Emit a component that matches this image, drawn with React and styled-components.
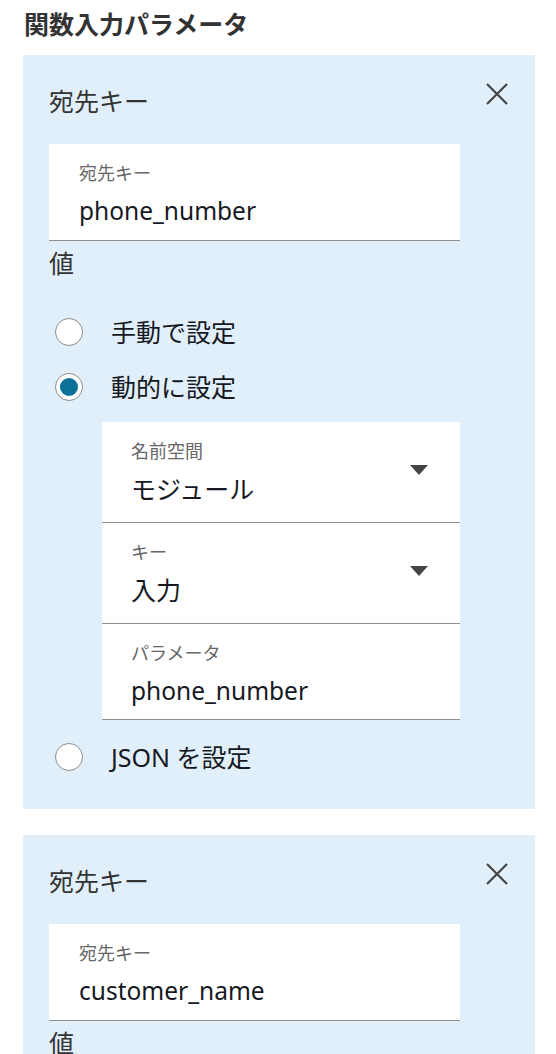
import React from 'react'
import styled, { createGlobalStyle } from 'styled-components'

const GlobalStyle = createGlobalStyle`
  body {
    margin: 0;
    background: #fff;
    font-family: "Noto Sans", "Noto Sans CJK JP", sans-serif;
    color: #16191f;
  }
`

const Page = styled.div`
  width: 556px;
  height: 1054px;
  overflow: hidden;
  padding: 0 21px 0 23px;
  box-sizing: border-box;
`

const Title = styled.h2`
  margin: 0 0 7px 1px;
  font-size: 25px;
  line-height: 48px;
  font-weight: 700;
  color: #333;
`

const Card = styled.div`
  background: #e1effb;
  padding: 0 26px 25px 26px;
  margin-bottom: 26px;
`

const CardHeader = styled.div`
  display: flex;
  justify-content: space-between;
  align-items: flex-start;
  height: 89px;
`

const CardTitle = styled.div`
  padding-top: 27px;
  font-size: 25px;
  line-height: 38px;
  color: #333;
`

const CloseButton = styled.button`
  margin-top: 27px;
  padding: 0;
  border: 0;
  background: none;
  width: 24px;
  height: 24px;
  display: flex;
`

const InputWrap = styled.div`
  width: 411px;
`

const FieldBox = styled.div`
  display: flex;
  align-items: flex-start;
  background: #fff;
  height: ${(props) => props.height}px;
  padding-left: ${(props) => props.indent}px;
  border-bottom: 1px solid #8f8f8f;
`

const FieldText = styled.div`
  flex: 1;
`

const FieldLabel = styled.div`
  padding-top: 17px;
  font-size: 18px;
  line-height: 24px;
  color: #666;
`

const FieldValue = styled.div`
  margin-top: 11px;
  font-size: ${(props) => props.cjk ? 25 : 24.5}px;
  line-height: 30px;
  color: #16191f;
`

const Caret = styled.span`
  margin: 43px 32px 0 0;
  width: 0;
  height: 0;
  border-left: 9px solid transparent;
  border-right: 9px solid transparent;
  border-top: 10px solid #444;
`

const ValueHeading = styled.div`
  font-size: 25px;
  line-height: 44px;
  color: #333;
`

const RadioGroup = styled.div`
  padding-top: 19px;
`

const RadioRow = styled.label`
  display: flex;
  align-items: center;
  height: 55px;
  padding-left: 6px;
  gap: 28px;
  font-size: 25px;
  line-height: 32px;
  color: #16191f;
`

const RadioCircle = styled.span`
  width: 28px;
  height: 28px;
  box-sizing: border-box;
  border-radius: 50%;
  border: 1px solid #8c8c8c;
  background: #fff;
  display: flex;
  align-items: center;
  justify-content: center;

  &::after {
    content: '';
    width: 18px;
    height: 18px;
    border-radius: 50%;
    background: ${(props) => props.checked ? '#0b7196' : 'transparent'};
  }
`

const Nested = styled.div`
  margin: 8px 0 9px 53px;
  width: 358px;
`

function CloseIcon () {
  return (
    <svg width='24' height='24' viewBox='0 0 24 24'>
      <path d='M2 2 L22 22 M22 2 L2 22' stroke='#444' strokeWidth='2.2' fill='none' />
    </svg>
  )
}

function Field ({ label, value, height = 96, indent = 30, select, cjk }) {
  return (
    <FieldBox height={height} indent={indent}>
      <FieldText>
        <FieldLabel>{label}</FieldLabel>
        <FieldValue cjk={cjk}>{value}</FieldValue>
      </FieldText>
      {select && <Caret />}
    </FieldBox>
  )
}

function Radio ({ label, checked }) {
  return (
    <RadioRow>
      <RadioCircle checked={checked} />
      {label}
    </RadioRow>
  )
}

function ParamCard ({ value, children }) {
  return (
    <Card>
      <CardHeader>
        <CardTitle>宛先キー</CardTitle>
        <CloseButton><CloseIcon /></CloseButton>
      </CardHeader>
      <InputWrap>
        <Field label='宛先キー' value={value} />
      </InputWrap>
      <ValueHeading>値</ValueHeading>
      {children}
    </Card>
  )
}

export default function App () {
  return (
    <Page>
      <GlobalStyle />
      <Title>関数入力パラメータ</Title>
      <ParamCard value='phone_number'>
        <RadioGroup>
          <Radio label='手動で設定' />
          <Radio label='動的に設定' checked />
        </RadioGroup>
        <Nested>
          <Field label='名前空間' value='モジュール' height={100} indent={29} select cjk />
          <Field label='キー' value='入力' height={100} indent={29} select cjk />
          <Field label='パラメータ' value='phone_number' height={95} indent={29} />
        </Nested>
        <Radio label='JSON を設定' />
      </ParamCard>
      <ParamCard value='customer_name' />
    </Page>
  )
}
